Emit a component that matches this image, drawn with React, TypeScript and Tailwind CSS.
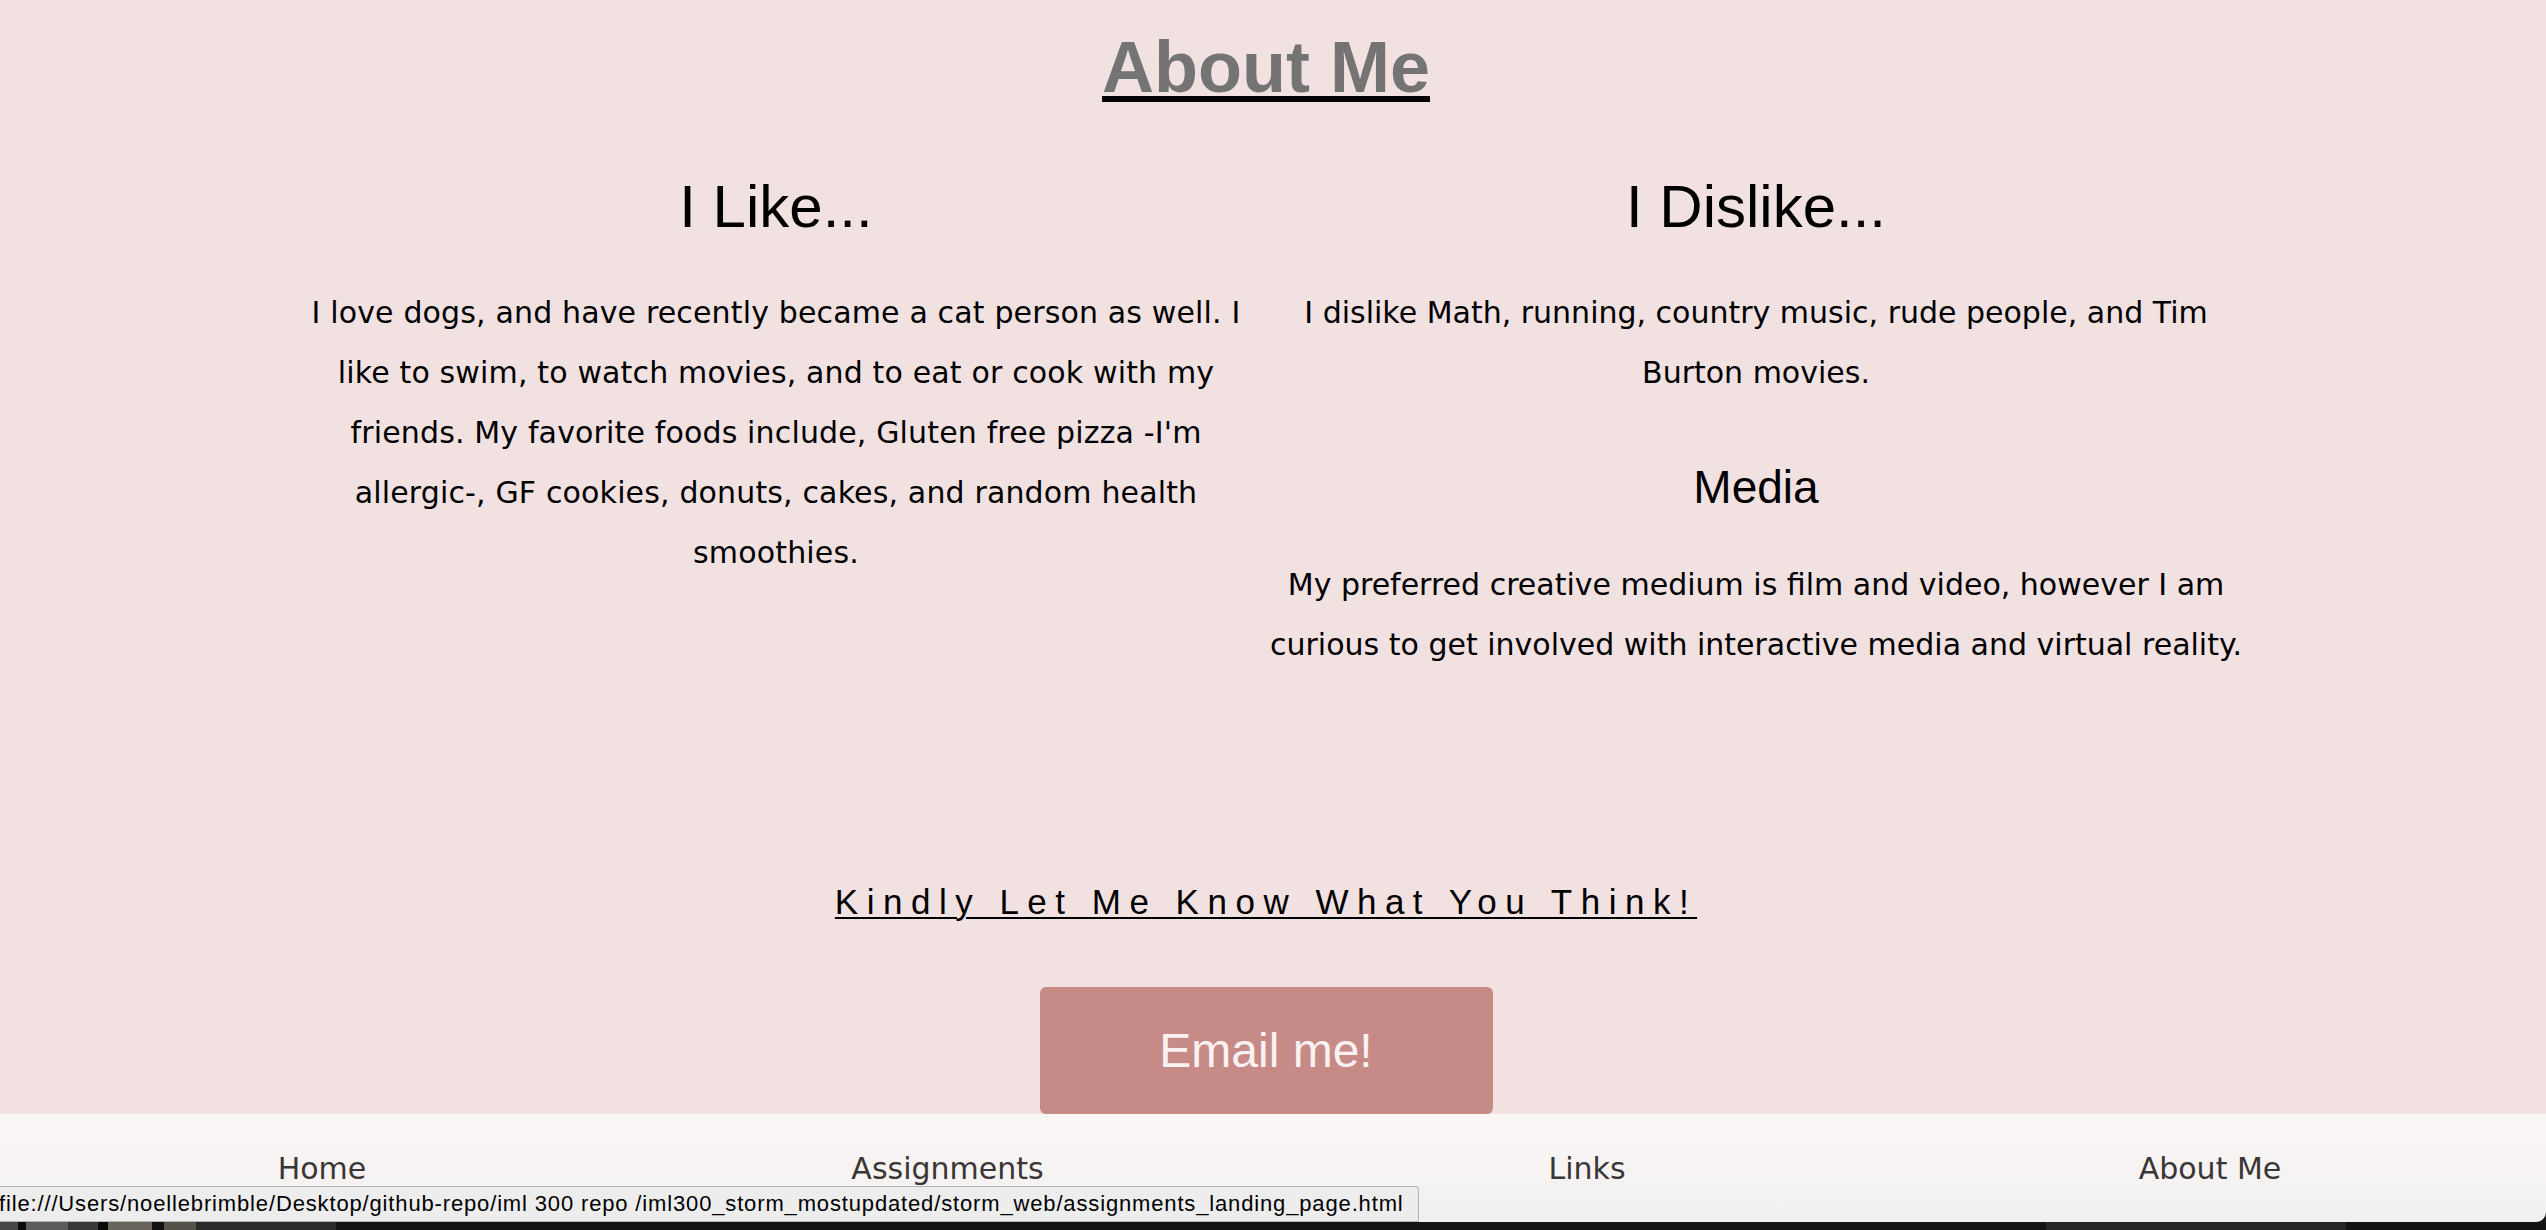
const heading = "font-['Liberation_Sans',Arial,sans-serif]";
const body = "font-['DejaVu_Sans',Verdana,sans-serif]";

const navItems = ["Home", "Assignments", "Links", "About Me"];

export default function App() {
  return (
    <div className="relative flex h-screen flex-col overflow-hidden bg-[#161616]">
      {/* Page content */}
      <main className="flex-1 overflow-hidden bg-[#f1e1e1] pr-[14px]">
        <h1
          className={`${heading} mt-[27px] text-center text-[72px] font-bold leading-[80px] text-[#747474] underline decoration-black decoration-[6px] underline-offset-[4px]`}
        >
          About Me
        </h1>

        <div className="mx-auto mt-[65px] grid w-[1960px] grid-cols-2 text-center text-black">
          {/* Likes */}
          <section>
            <h2 className={`${heading} text-[60px] leading-[70px]`}>I Like...</h2>
            <p className={`${body} mt-[41px] text-[30px] leading-[60px] tracking-[0.15px]`}>
              I love dogs, and have recently became a cat person as well. I like to swim, to watch
              movies, and to eat or cook with my friends. My favorite foods include, Gluten free
              pizza -I'm allergic-, GF cookies, donuts, cakes, and random health smoothies.
            </p>
          </section>

          {/* Dislikes + media */}
          <section>
            <h2 className={`${heading} text-[60px] leading-[70px]`}>I Dislike...</h2>
            <p className={`${body} mt-[41px] text-[30px] leading-[60px]`}>
              I dislike Math, running, country music, rude people, and Tim Burton movies.
            </p>
            <h3 className={`${heading} mt-[58px] text-[46px] leading-[52px]`}>Media</h3>
            <p className={`${body} mt-[42px] text-[30px] leading-[60px]`}>
              My preferred creative medium is film and video, however I am curious to get involved
              with interactive media and virtual reality.
            </p>
          </section>
        </div>

        <div className="mt-[207px] flex flex-col items-center">
          <a
            href="#"
            className={`${heading} text-[35px] leading-[40px] tracking-[8.5px] text-black underline decoration-2 underline-offset-[3px]`}
          >
            Kindly Let Me Know What You Think!
          </a>
          <button
            className={`${heading} mt-[65px] h-[127px] w-[453px] rounded-[6px] bg-[#c78b87] text-[48px] text-[#faf2f2]`}
          >
            Email me!
          </button>
        </div>
      </main>

      {/* Bottom nav */}
      <nav className="relative h-[108px] shrink-0 rounded-br-[10px] bg-gradient-to-b from-[#faf7f6] to-[#f2f0ef]">
        <ul
          className={`${body} ml-[7px] grid grid-cols-[630px_621px_658px_588px] pt-[35px] text-center text-[30px] leading-[40px] text-[#3b3636]`}
        >
          {navItems.map((item) => (
            <li key={item}>{item}</li>
          ))}
        </ul>

        {/* Link preview status bar */}
        <div className="absolute bottom-0 left-0 flex h-[36px] w-[1419px] items-center rounded-tr-[4px] border-y border-r border-[#b2b2b2] bg-[#ededed]">
          <span
            className={`${heading} -ml-[1px] whitespace-nowrap text-[22px] leading-[26px] tracking-[0.85px] text-black`}
          >
            file:///Users/noellebrimble/Desktop/github-repo/iml 300 repo /iml300_storm_mostupdated/storm_web/assignments_landing_page.html
          </span>
        </div>
      </nav>

      {/* Desktop peeking under the window */}
      <div className="flex h-[8px] shrink-0">
        <div className="w-[18px] bg-[#474747]" />
        <div className="w-[8px] bg-[#0c0c0c]" />
        <div className="w-[42px] bg-[#5c5c5c]" />
        <div className="w-[30px] bg-[#383838]" />
        <div className="w-[10px] bg-[#0a0a0a]" />
        <div className="w-[44px] bg-[#6a655c]" />
        <div className="w-[12px] bg-[#111111]" />
        <div className="w-[32px] bg-[#55524a]" />
        <div className="w-[140px] bg-[#2a2a2a]" />
        <div className="flex-1 bg-[#141414]" />
        <div className="w-[300px] bg-[#262626]" />
        <div className="w-[200px] bg-[#121212]" />
      </div>
    </div>
  );
}
